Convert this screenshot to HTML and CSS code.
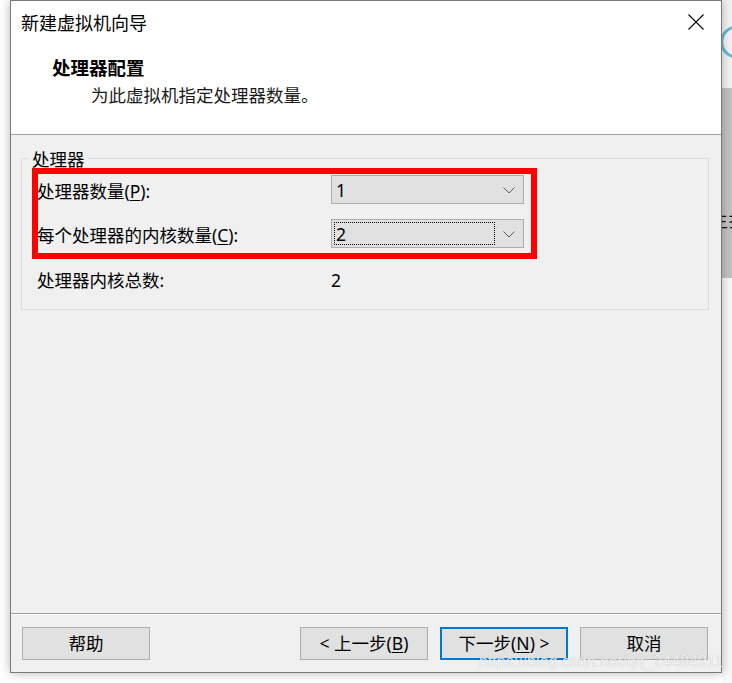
FILE: index.html
```html
<!DOCTYPE html>
<html lang="zh-CN">
<head>
<meta charset="utf-8">
<title>新建虚拟机向导</title>
<link rel="stylesheet" href="styles.css">
</head>
<body>
<div class="screen">
  <div class="gutter-left"></div>
  <div class="dialog">
    <header class="head">
      <div class="titlebar">
        <span class="title">新建虚拟机向导</span>
        <svg class="close" width="16" height="16" viewBox="0 0 16 16"><path d="M0.5 0.5 L15.5 15.5 M15.5 0.5 L0.5 15.5" stroke="#000" stroke-width="1.1" fill="none"/></svg>
      </div>
      <div class="step">处理器配置</div>
      <div class="desc">为此虚拟机指定处理器数量。</div>
    </header>
    <main class="body">
      <section class="group">
        <span class="legend">处理器</span>
        <div class="row">
          <label class="label">处理器数量(<u>P</u>):</label>
          <div class="combo">
            <span class="val">1</span>
            <span class="arrow"><svg width="12" height="7" viewBox="0 0 12 7"><path d="M0.5 0.5 L6 6 L11.5 0.5" stroke="#5a5a5a" stroke-width="1" fill="none"/></svg></span>
          </div>
        </div>
        <div class="row">
          <label class="label">每个处理器的内核数量(<u>C</u>):</label>
          <div class="combo">
            <span class="val focus">2</span>
            <span class="arrow"><svg width="12" height="7" viewBox="0 0 12 7"><path d="M0.5 0.5 L6 6 L11.5 0.5" stroke="#5a5a5a" stroke-width="1" fill="none"/></svg></span>
          </div>
        </div>
        <div class="row total">
          <span class="label">处理器内核总数:</span>
          <span class="num">2</span>
        </div>
        <div class="mark"></div>
      </section>
    </main>
    <footer class="foot">
      <button class="btn help">帮助</button>
      <button class="btn">&lt; 上一步(<u>B</u>)</button>
      <button class="btn primary">下一步(<u>N</u>) &gt;</button>
      <button class="btn">取消</button>
    </footer>
  </div>
  <div class="gutter-right">
    <div class="bg-top">
      <svg class="ring" width="34" height="36" viewBox="0 0 34 36"><circle cx="16.7" cy="18" r="15" stroke="#6ab8d6" stroke-width="3" fill="none"/></svg>
    </div>
    <div class="bg-mid"><span class="behind-text">主扌</span></div>
    <div class="bg-rest"></div>
  </div>
</div>
<div class="watermark">https://blog.csdn.net/qq_24484911</div>
</body>
</html>
```

FILE: styles.css
```css
* { box-sizing: border-box; margin: 0; padding: 0; }
html, body { width: 732px; height: 683px; overflow: hidden; background: #fff; }
body {
  position: relative;
  font-family: "Noto Sans", "Noto Sans CJK SC", sans-serif;
  color: #000;
}
.screen { display: flex; height: 683px; }
.gutter-left { flex: 0 0 10px; background: #fff; }

.dialog {
  flex: 0 0 712px;
  height: 673px;
  border: 1px solid #7a7a7a;
  background: #f0f0f0;
  display: flex;
  flex-direction: column;
  position: relative;
  z-index: 1;
  box-shadow: 0 0 10px rgba(0, 0, 0, 0.28);
}

.head { flex: none; height: 134px; background: #fff; border-bottom: 1px solid #a0a0a0; }
.titlebar {
  height: 42px;
  display: flex;
  align-items: center;
  justify-content: space-between;
  padding: 0 17px 0 10px;
}
.title { font-family: "Noto Sans CJK SC", sans-serif; font-size: 18px; line-height: 42px; }
.close { display: block; }
.step {
  margin-top: 11px;
  padding-left: 41px;
  font-family: "Noto Sans CJK SC", sans-serif;
  font-size: 18.5px;
  font-weight: 700;
  line-height: 26px;
}
.desc {
  padding-left: 80px;
  font-family: "Noto Sans CJK SC", sans-serif;
  font-size: 17.5px;
  line-height: 30px;
  color: #1a1a1a;
}

.body { flex: 1 1 auto; padding: 23px 12px 0 10px; }
.group {
  position: relative;
  border: 1px solid #dcdcdc;
  padding: 16px 0 16px 15px;
  display: flex;
  flex-direction: column;
  gap: 15px;
}
.legend {
  position: absolute;
  left: 7px;
  top: -10px;
  padding: 0 3px;
  background: #f0f0f0;
  font-family: "Noto Sans CJK SC", sans-serif;
  font-size: 17.5px;
  line-height: 20px;
}
.row { display: flex; align-items: center; height: 29px; }
.row.total { margin-top: 1px; }
.label {
  flex: 0 0 294px;
  font-size: 17.5px;
  line-height: 25px;
  padding-top: 4px;
}
.label u, .btn u { text-underline-offset: 2px; }
.combo {
  flex: 0 0 193px;
  height: 29px;
  border: 1px solid #adadad;
  background: #e1e1e1;
  display: flex;
  padding: 2px 0 2px 2px;
}
.val {
  flex: 0 0 161px;
  border: 1px dotted transparent;
  padding-left: 1px;
  display: flex;
  align-items: center;
  font-size: 17.5px;
  line-height: 20px;
}
.val.focus { border-color: #000; }
.arrow { flex: 1 1 auto; display: flex; align-items: center; justify-content: center; padding-top: 1px; }
.arrow svg { display: block; }
.num { font-size: 17.5px; line-height: 25px; padding-top: 4px; }

.mark {
  position: absolute;
  left: 10px;
  top: 9px;
  width: 505px;
  height: 91px;
  border: 6px solid #ff0000;
}

.foot {
  flex: none;
  height: 59px;
  border-top: 1px solid #a0a0a0;
  box-shadow: inset 0 1px #ffffff;
  padding: 13px 13px 0 11px;
  display: flex;
  gap: 12px;
}
.btn {
  flex: 0 0 128px;
  height: 33px;
  border: 1px solid #adadad;
  background: #e1e1e1;
  font-family: "Noto Sans", "Noto Sans CJK SC", sans-serif;
  font-size: 17.5px;
  line-height: 29px;
  color: #000;
  text-align: center;
}
.btn.help { margin-right: auto; }
.btn.primary { border: 2px solid #0078d7; }

.gutter-right { flex: 0 0 10px; display: flex; flex-direction: column; background: #f8f8f8; }
.bg-top { flex: none; height: 88px; background: #f3f3f3; }
.ring { display: block; margin: 24px 0 0 -2px; }
.bg-mid { flex: none; height: 190px; background: #c2c2c2; padding-top: 122px; }
.behind-text {
  display: block;
  margin-left: -11px;
  white-space: nowrap;
  font-family: "Noto Sans CJK SC", sans-serif;
  font-size: 17px;
  line-height: 20px;
  color: #111;
}
.bg-rest { flex: 1 1 auto; background: #f8f8f8; }

.watermark {
  position: absolute;
  left: 479px;
  top: 652px;
  z-index: 2;
  font-family: "Liberation Sans", Arial, sans-serif;
  font-size: 16px;
  line-height: 20px;
  white-space: nowrap;
  color: rgba(255, 255, 255, 0.85);
  text-shadow: 0 0 1px rgba(0, 0, 0, 0.18), 0 0 1px rgba(0, 0, 0, 0.12);
}
```
